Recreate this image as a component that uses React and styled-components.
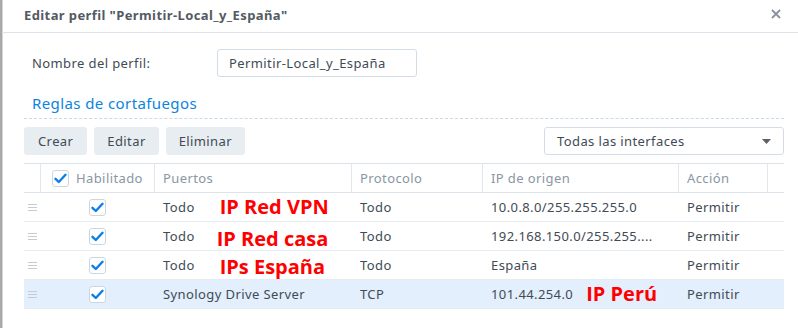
import React from "react";
import styled, { createGlobalStyle } from "styled-components";

const Global = createGlobalStyle`
  html, body { margin: 0; padding: 0; background: #fff; }
  body {
    font-family: "Noto Sans", "Open Sans", sans-serif;
    font-size: 13px;
    letter-spacing: 0.4px;
    color: #414b55;
  }
  * { box-sizing: border-box; }
`;

const Window = styled.div`
  width: 798px;
  height: 328px;
  background: #fff;
  border-left: 2px solid #a9a9a9;
  box-shadow: inset 1px 0 0 #d4d4d4;
  overflow: hidden;
`;

const Header = styled.div`
  height: 33px;
  display: flex;
  align-items: center;
  justify-content: space-between;
  padding: 0 15px 0 22px;
  border-bottom: 1px solid #dce3ea;
`;

const Title = styled.div`
  font-weight: 700;
  font-size: 13px;
  color: #535a63;
  padding-bottom: 2px;
`;

const Close = styled.button`
  border: 0;
  background: none;
  padding: 0;
  width: 14px;
  height: 14px;
  display: flex;
  align-items: center;
  justify-content: center;
  margin-bottom: 4px;
`;

const Body = styled.div`
  padding: 16px 14px 0 22px;
`;

const FormRow = styled.div`
  display: flex;
  align-items: center;
  height: 28px;
  padding-left: 8px;
`;

const Label = styled.div`
  width: 185px;
`;

const Input = styled.div`
  width: 200px;
  height: 28px;
  border: 1px solid #d4dde6;
  border-radius: 3px;
  padding: 0 11px;
  display: flex;
  align-items: center;
`;

const SectionTitle = styled.div`
  margin-top: 16px;
  padding: 0 0 5px 8px;
  height: 26px;
  color: #0a84e0;
  font-size: 15px;
  line-height: 20px;
  border-bottom: 1px dashed #cfd8e1;
`;

const Toolbar = styled.div`
  margin-top: 8px;
  display: flex;
  gap: 7px;
  align-items: center;
`;

const Button = styled.button`
  height: 28px;
  padding: 0 ${(p) => p.$px || 14}px;
  border: 0;
  border-radius: 3px;
  background: #e8edf2;
  color: #414b55;
  font: inherit;
  letter-spacing: inherit;
`;

const Select = styled.div`
  margin-left: auto;
  width: 240px;
  height: 28px;
  border: 1px solid #d4dde6;
  border-radius: 3px;
  display: flex;
  align-items: center;
  justify-content: space-between;
  padding: 0 12px 0 12px;
`;

const Table = styled.div`
  margin-top: 8px;
  border-top: 1px solid #dce3ea;
`;

const Row = styled.div`
  display: grid;
  grid-template-columns: 16px 114px 197px 131px 196px 89px 1fr;
  height: 29px;
  border-bottom: 1px solid ${(p) => (p.$head ? "#dce3ea" : "#e6ebf0")};
  background: ${(p) => (p.$selected ? "#e3effc" : "#fff")};
`;

const HeadCell = styled.div`
  display: flex;
  align-items: center;
  gap: 7px;
  padding-left: ${(p) => p.$pl ?? 8}px;
  border-left: ${(p) => (p.$first ? "0" : "1px solid #e1e7ed")};
  color: #8a96a3;
`;

const Cell = styled.div`
  display: flex;
  align-items: center;
  padding-left: ${(p) => (p.$center ? 0 : 9)}px;
  justify-content: ${(p) => (p.$center ? "center" : "flex-start")};
  white-space: nowrap;
`;

const Handle = styled.div`
  display: flex;
  flex-direction: column;
  gap: 2px;
  padding-left: 4px;
  justify-content: center;
  span {
    display: block;
    width: 9px;
    height: 1px;
    background: #c3ccd5;
  }
`;

const Box = styled.span`
  width: 17px;
  height: 17px;
  border: 1px solid #cdd6df;
  border-radius: 3px;
  background: #fff;
  display: inline-flex;
  align-items: center;
  justify-content: center;
  flex-shrink: 0;
`;

const Note = styled.span`
  font-family: "Open Sans", "Liberation Sans", sans-serif;
  font-weight: 700;
  font-size: 20px;
  letter-spacing: 0;
  color: #ff0000;
  margin-left: ${(p) => p.$ml}px;
  transform: translateY(${(p) => p.$dy || 0}px);
  line-height: 24px;
`;

const Check = () => (
  <Box>
    <svg width="13" height="11" viewBox="0 0 13 11">
      <path d="M1.5 5.8 L4.8 9 L11.5 1.8" fill="none" stroke="#0b7fe8" strokeWidth="2.4" strokeLinecap="round" strokeLinejoin="round" />
    </svg>
  </Box>
);

const rows = [
  { port: "Todo", note: "IP Red VPN", nml: 25, ndy: 0, proto: "Todo", ip: "10.0.8.0/255.255.255.0" },
  { port: "Todo", note: "IP Red casa", nml: 22, ndy: 3, proto: "Todo", ip: "192.168.150.0/255.255...." },
  { port: "Todo", note: "IPs España", nml: 25, ndy: 2, proto: "Todo", ip: "España" },
  { port: "Synology Drive Server", proto: "TCP", ip: "101.44.254.0", ipNote: "IP Perú", selected: true },
];

export default function App() {
  return (
    <>
      <Global />
      <Window>
        <Header>
          <Title>Editar perfil "Permitir-Local_y_España"</Title>
          <Close aria-label="close">
            <svg width="10" height="10" viewBox="0 0 10 10">
              <path d="M1 1 L9 9 M9 1 L1 9" stroke="#8b919b" strokeWidth="1.8" />
            </svg>
          </Close>
        </Header>
        <Body>
          <FormRow>
            <Label>Nombre del perfil:</Label>
            <Input>Permitir-Local_y_España</Input>
          </FormRow>
          <SectionTitle>Reglas de cortafuegos</SectionTitle>
          <Toolbar>
            <Button $px={14}>Crear</Button>
            <Button $px={13}>Editar</Button>
            <Button $px={13}>Eliminar</Button>
            <Select>
              <span>Todas las interfaces</span>
              <svg width="9" height="5" viewBox="0 0 9 5">
                <path d="M0 0 H9 L4.5 5 Z" fill="#5a6169" />
              </svg>
            </Select>
          </Toolbar>
          <Table>
            <Row $head>
              <HeadCell $first />
              <HeadCell $pl={11}>
                <Check />
                Habilitado
              </HeadCell>
              <HeadCell>Puertos</HeadCell>
              <HeadCell>Protocolo</HeadCell>
              <HeadCell>IP de origen</HeadCell>
              <HeadCell>Acción</HeadCell>
              <HeadCell />
            </Row>
            {rows.map((r, i) => (
              <Row key={i} $selected={r.selected}>
                <Handle>
                  <span />
                  <span />
                  <span />
                </Handle>
                <Cell $center>
                  <Check />
                </Cell>
                <Cell>
                  {r.port}
                  {r.note && (
                    <Note $ml={r.nml} $dy={r.ndy}>
                      {r.note}
                    </Note>
                  )}
                </Cell>
                <Cell>{r.proto}</Cell>
                <Cell>
                  {r.ip}
                  {r.ipNote && (
                    <Note $ml={13} $dy={0}>
                      {r.ipNote}
                    </Note>
                  )}
                </Cell>
                <Cell>Permitir</Cell>
                <Cell />
              </Row>
            ))}
          </Table>
        </Body>
      </Window>
    </>
  );
}
